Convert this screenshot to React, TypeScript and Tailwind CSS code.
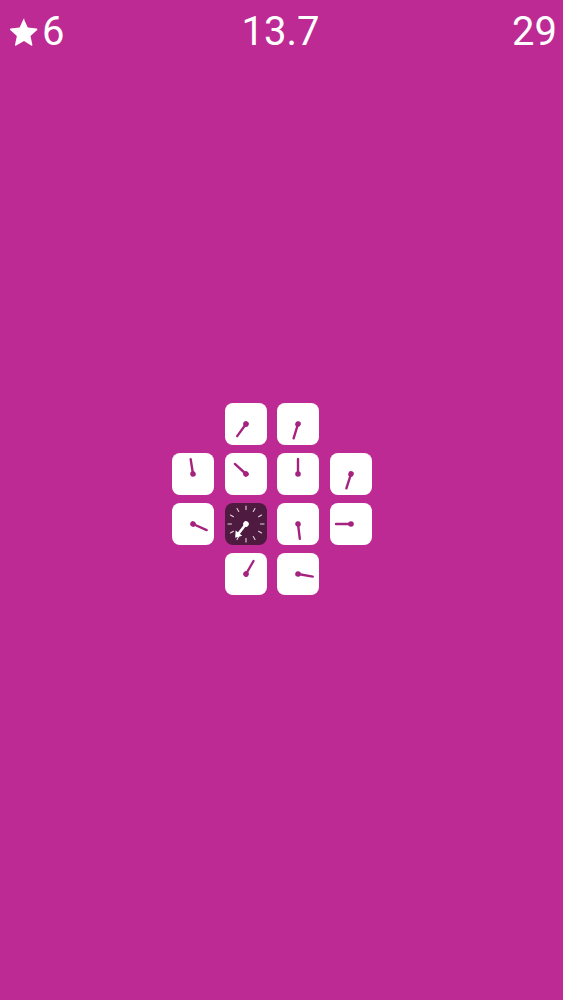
import React from "react";

type Tile = { row: number; col: number; angle: number; active?: boolean };

const tiles: Tile[] = [
  { row: 0, col: 1, angle: 216 },
  { row: 0, col: 2, angle: 197 },
  { row: 1, col: 0, angle: 351 },
  { row: 1, col: 1, angle: 312 },
  { row: 1, col: 2, angle: 0 },
  { row: 1, col: 3, angle: 198 },
  { row: 2, col: 0, angle: 114 },
  { row: 2, col: 1, angle: 218, active: true },
  { row: 2, col: 2, angle: 173 },
  { row: 2, col: 3, angle: 270 },
  { row: 3, col: 1, angle: 30 },
  { row: 3, col: 2, angle: 100 },
];

function ClockTile({ angle, active }: { angle: number; active?: boolean }) {
  const ticks = Array.from({ length: 12 }, (_, i) => i * 30);
  return (
    <div
      className={
        active
          ? "h-[42px] w-[42px] rounded-[8px] bg-[#4e1a3f]"
          : "h-[42px] w-[42px] rounded-[8px] bg-white"
      }
    >
      <svg viewBox="0 0 42 42" width="42" height="42">
        {active &&
          ticks.map((t) => (
            <line
              key={t}
              x1="21"
              y1="3"
              x2="21"
              y2="6.5"
              stroke="#e8d3df"
              strokeWidth="1.1"
              strokeLinecap="round"
              transform={`rotate(${t} 21 21)`}
            />
          ))}
        <g transform={`rotate(${angle} 21 21)`}>
          {active ? (
            <>
              <line x1="21" y1="21" x2="21" y2="6.5" stroke="#ffffff" strokeWidth="2.6" strokeLinecap="round" />
              <path d="M21 3.5 L16.8 9.5 L25.2 9.5 Z" fill="#ffffff" />
              <circle cx="21" cy="21" r="2.8" fill="#ffffff" />
            </>
          ) : (
            <>
              <line x1="21" y1="21" x2="21" y2="6" stroke="#a5237f" strokeWidth="2.4" strokeLinecap="round" />
              <circle cx="21" cy="21" r="2.8" fill="#a5237f" />
            </>
          )}
        </g>
      </svg>
    </div>
  );
}

export default function App() {
  return (
    <div
      className="flex h-[1000px] w-full flex-col bg-[#be2a93] text-white"
      style={{ fontFamily: "Roboto, 'Liberation Sans', sans-serif" }}
    >
      <div className="grid h-[60px] grid-cols-[1fr_auto_1fr] items-center pl-[9px] pr-[6px] pt-[3px] text-[40px] leading-none">
        <div className="flex items-center">
          <svg viewBox="0 0 24 24" width="30" height="30" className="mr-[3px]">
            <path
              d="M12 1.8l3 6.6 7.1.7c.6.1.8.8.4 1.2l-5.3 4.8 1.5 7c.1.6-.5 1-1 .7L12 19.2l-6.2 3.6c-.5.3-1.1-.1-1-.7l1.5-7L1 10.3c-.4-.4-.2-1.1.4-1.2l7.1-.7 3-6.6c.2-.5.9-.5 1.1 0z"
              fill="#ffffff"
            />
          </svg>
          <span>6</span>
        </div>
        <span className="pr-[5px] text-center">13.7</span>
        <span className="text-right">29</span>
      </div>
      <div className="flex justify-center pr-[19px] pt-[343px]">
        <div className="grid grid-cols-[repeat(4,42px)] grid-rows-[repeat(4,42px)] gap-x-[10.5px] gap-y-[8px]">
          {Array.from({ length: 16 }, (_, i) => {
            const r = Math.floor(i / 4);
            const c = i % 4;
            const t = tiles.find((x) => x.row === r && x.col === c);
            return t ? (
              <ClockTile key={i} angle={t.angle} active={t.active} />
            ) : (
              <div key={i} />
            );
          })}
        </div>
      </div>
    </div>
  );
}
